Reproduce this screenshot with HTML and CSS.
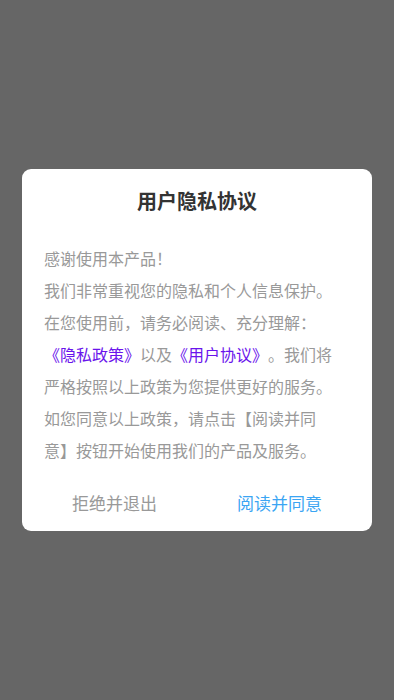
FILE: index.html
```html
<!DOCTYPE html>
<html lang="zh-CN">
<head>
<meta charset="utf-8">
<meta name="viewport" content="width=device-width, initial-scale=1">
<title>用户隐私协议</title>
<link rel="stylesheet" href="styles.css">
</head>
<body>
<div class="overlay">
  <div class="dialog">
    <div class="title">用户隐私协议</div>
    <div class="content">
      <p>感谢使用本产品！</p>
      <p>我们非常重视您的隐私和个人信息保护。在您使用前，请务必阅读、充分理解：<span class="link">《隐私政策》</span>以及<span class="link">《用户协议》</span>。我们将严格按照以上政策为您提供更好的服务。如您同意以上政策，请点击【阅读并同意】按钮开始使用我们的产品及服务。</p>
    </div>
    <div class="actions">
      <div class="btn btn-cancel">拒绝并退出</div>
      <div class="btn btn-ok">阅读并同意</div>
    </div>
  </div>
</div>
</body>
</html>
```
FILE: styles.css
```css
html, body {
  margin: 0;
  padding: 0;
  height: 100%;
}
body {
  background: #666666;
  font-family: "Noto Sans CJK SC", "Noto Sans", sans-serif;
  text-spacing-trim: space-all;
}
.overlay {
  height: 700px;
  display: flex;
  align-items: center;
  justify-content: center;
}
.dialog {
  width: 350px;
  background: #ffffff;
  border-radius: 9px;
  padding: 20px 0 5px;
  box-sizing: border-box;
}
.title {
  text-align: center;
  font-size: 20px;
  font-weight: bold;
  line-height: 24px;
  color: #333333;
}
.content {
  margin-top: 29px;
  padding: 0 30px 0 22px;
  font-size: 16px;
  line-height: 32px;
  color: #999999;
  line-break: strict;
}
.content p {
  margin: 0;
}
.link {
  color: #6a14ec;
}
.actions {
  display: flex;
  padding: 14px 10px 0;
}
.btn {
  flex: 1;
  text-align: center;
  font-size: 17px;
  line-height: 46px;
}
.btn-cancel {
  color: #999999;
}
.btn-ok {
  color: #3ba5f3;
}
```
